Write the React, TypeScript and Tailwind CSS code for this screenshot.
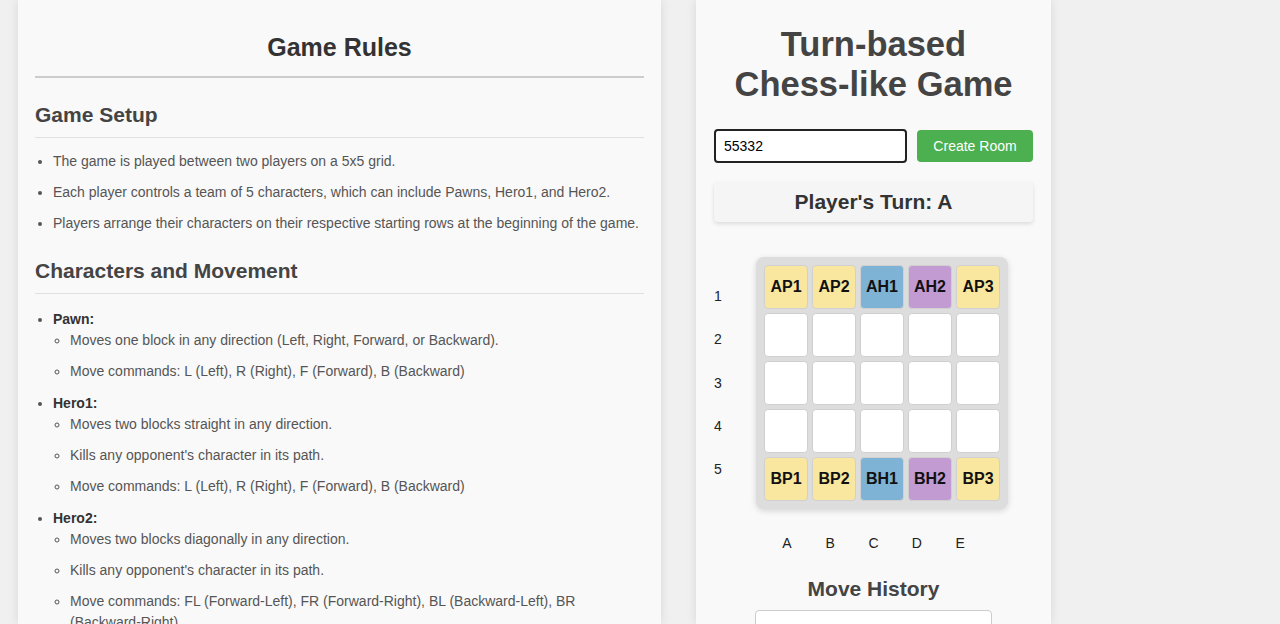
import React from 'react';

const board: string[][] = [
  ['AP1', 'AP2', 'AH1', 'AH2', 'AP3'],
  ['', '', '', '', ''],
  ['', '', '', '', ''],
  ['', '', '', '', ''],
  ['BP1', 'BP2', 'BH1', 'BH2', 'BP3'],
];

function cellColor(v: string) {
  if (!v) return 'bg-white';
  if (v[1] === 'P') return 'bg-[#f9e79f]';
  if (v.endsWith('H1')) return 'bg-[#7fb3d5]';
  return 'bg-[#c39bd3]';
}

function Rules() {
  return (
    <div className="w-[643px] shrink-0 bg-[#f9f9f9] px-[17px] shadow-[0_0_10px_rgba(0,0,0,0.1)]">
      <h2 className="mt-[33px] border-b-2 border-[#ccc] pb-[14px] text-center text-[25px] leading-[29px] font-bold text-[#333]">
        Game Rules
      </h2>

      <h3 className="mt-[25px] border-b border-[#e0e0e0] pb-[10px] text-[21px] leading-[24px] font-bold text-[#444]">
        Game Setup
      </h3>
      <ul className="mt-[13px] list-disc pl-[18px] text-[14px] leading-[21px] text-[#555]">
        <li className="mb-[10px]">The game is played between two players on a 5x5 grid.</li>
        <li className="mb-[10px]">
          Each player controls a team of 5 characters, which can include Pawns, Hero1, and Hero2.
        </li>
        <li className="mb-[10px]">
          Players arrange their characters on their respective starting rows at the beginning of the game.
        </li>
      </ul>

      <h3 className="mt-[25px] border-b border-[#e0e0e0] pb-[10px] text-[21px] leading-[24px] font-bold text-[#444]">
        Characters and Movement
      </h3>
      <ul className="mt-[14px] list-disc pl-[18px] text-[14px] leading-[21px] text-[#555]">
        <li className="mb-[10px]">
          <strong className="block leading-[22px] text-[#333]">Pawn:</strong>
          <ul className="list-[circle] pl-[17px]">
            <li className="mb-[10px]">Moves one block in any direction (Left, Right, Forward, or Backward).</li>
            <li className="mb-[10px]">Move commands: L (Left), R (Right), F (Forward), B (Backward)</li>
          </ul>
        </li>
        <li className="mb-[10px]">
          <strong className="block leading-[22px] text-[#333]">Hero1:</strong>
          <ul className="list-[circle] pl-[17px]">
            <li className="mb-[10px]">Moves two blocks straight in any direction.</li>
            <li className="mb-[10px]">Kills any opponent's character in its path.</li>
            <li className="mb-[10px]">Move commands: L (Left), R (Right), F (Forward), B (Backward)</li>
          </ul>
        </li>
        <li className="mb-[10px]">
          <strong className="block leading-[22px] text-[#333]">Hero2:</strong>
          <ul className="list-[circle] pl-[17px]">
            <li className="mb-[10px]">Moves two blocks diagonally in any direction.</li>
            <li className="mb-[10px]">Kills any opponent's character in its path.</li>
            <li className="mb-[10px] pr-[60px]">
              Move commands: FL (Forward-Left), FR (Forward-Right), BL (Backward-Left), BR (Backward-Right)
            </li>
          </ul>
        </li>
      </ul>
    </div>
  );
}

function Game() {
  return (
    <div className="w-[355px] shrink-0 bg-[#f9f9f9] px-[18px] pt-[24px] shadow-[0_0_10px_rgba(0,0,0,0.1)]">
      <h1 className="text-center text-[34.5px] leading-[40px] font-bold text-[#444]">
        Turn-based
        <br />
        Chess-like Game
      </h1>

      <div className="mt-[25px] flex items-center gap-[10px]">
        <input
          defaultValue="55332"
          className="h-[34px] w-[193px] rounded-[4px] border-2 border-[#222] bg-white px-[8px] text-[14px] text-black outline-none"
        />
        <button className="h-[32px] w-[116px] rounded-[4px] bg-[#4caf50] text-[14px] text-white">
          Create Room
        </button>
      </div>

      <div className="mt-[19px] flex h-[40px] items-center justify-center rounded-[4px] bg-[#f5f5f5] shadow-[0_2px_4px_rgba(0,0,0,0.12)]">
        <span className="text-[21px] leading-[24px] font-bold text-[#333]">Player's Turn: A</span>
      </div>

      <div className="mt-[35px] flex">
        <div className="w-[42px] pt-[18px] text-[14px] text-[#222]">
          {[1, 2, 3, 4, 5].map((n) => (
            <div key={n} className="h-[43.3px] leading-[43.3px]">
              {n}
            </div>
          ))}
        </div>
        <div className="grid grid-cols-[repeat(5,44px)] gap-[4px] rounded-[8px] bg-[#ddd] p-[8px] shadow-[0_2px_6px_rgba(0,0,0,0.15)]">
          {board.flat().map((v, i) => (
            <div
              key={i}
              className={`flex h-[44px] w-[44px] items-center justify-center rounded-[4px] border border-[#d0d0d0] text-[16px] font-bold text-[#111] ${cellColor(v)}`}
            >
              {v}
            </div>
          ))}
        </div>
      </div>

      <div className="mt-[25px] flex justify-center text-[14px] leading-[18px] text-[#222]">
        {['A', 'B', 'C', 'D', 'E'].map((c) => (
          <div key={c} className="w-[43.3px] text-center">
            {c}
          </div>
        ))}
      </div>

      <h3 className="mt-[25px] text-center text-[21px] leading-[24px] font-bold text-[#444]">Move History</h3>
      <div className="mx-auto mt-[9px] h-[120px] w-[237px] rounded-[4px] border border-[#ccc] bg-white"></div>
    </div>
  );
}

export default function App() {
  return (
    <div className="flex h-[624px] gap-[35px] overflow-hidden bg-[#f0f0f0] pl-[18px] font-['Liberation_Sans',Arial,sans-serif]">
      <Rules />
      <Game />
    </div>
  );
}
